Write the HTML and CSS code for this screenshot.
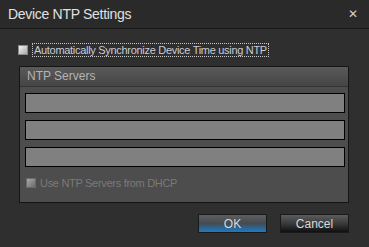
FILE: index.html
```html
<!DOCTYPE html>
<html>
<head>
	<title>Device NTP Settings</title>
	<link rel="stylesheet" href="styles.css">
</head>
<body>
	<div class="dialog">
		<div class="titlebar">
			<span class="title">Device NTP Settings</span>
			<span class="close">&#x2715;</span>
		</div>
		<div class="body">
			<label class="check-row">
				<span class="box"></span>
				<span class="focus">Automatically Synchronize Device Time using NTP</span>
			</label>
			<div class="group">
				<div class="group-head">NTP Servers</div>
				<div class="group-body">
					<input class="server" type="text">
					<input class="server" type="text">
					<input class="server" type="text">
					<label class="check-row disabled">
						<span class="box"></span>
						<span>Use NTP Servers from DHCP</span>
					</label>
				</div>
			</div>
			<div class="buttons">
				<button class="btn ok">OK</button>
				<button class="btn cancel">Cancel</button>
			</div>
		</div>
	</div>
</body>
</html>
```

FILE: styles.css
```css
body {
	margin: 0;
	padding: 0;
	background: #2e2e2e;
	font-family: 'Liberation Sans', Arial, sans-serif;
}
.dialog {
	width: 369px;
	height: 247px;
	background: #2f2f2f;
	overflow: hidden;
}
.titlebar {
	height: 28px;
	background: #2a2a2a;
	border-bottom: 1px solid #1a1a1a;
	display: flex;
	align-items: center;
	justify-content: space-between;
	padding: 0 11px 0 8px;
}
.title {
	color: #e0e0e0;
	font-size: 14px;
	letter-spacing: -0.3px;
}
.close {
	color: #d0d0d0;
	font-size: 12px;
}
.body {
	padding: 15px 20px 0 18px;
}
.check-row {
	display: flex;
	align-items: center;
	font-size: 11px;
	letter-spacing: -0.3px;
	color: #c9cdd6;
}
.box {
	width: 8px;
	height: 8px;
	border: 1px solid #8a8a8a;
	background: linear-gradient(135deg, #f4f4f4, #a8a8a8);
	margin-right: 5px;
}
.focus {
	outline: 1px dotted #c8c8c8;
	padding: 0 1px;
}
.group {
	margin: 10px 0 0 1px;
	border: 1px solid #151515;
	background: #4d4d4d;
}
.group-head {
	height: 19px;
	line-height: 19px;
	padding-left: 7px;
	font-size: 12px;
	color: #b4b4b4;
	background: linear-gradient(#5a5a5a, #454545);
	border-bottom: 1px solid #333;
}
.group-body {
	padding: 6px 3px 13px 5px;
	display: flex;
	flex-direction: column;
	gap: 7px;
}
.server {
	height: 18px;
	margin: 0;
	padding: 0;
	border: 1px solid #000;
	background: #808080;
}
.check-row.disabled {
	color: #7a7a7a;
	margin-top: 3px;
	padding-left: 1px;
}
.check-row.disabled .box {
	background: linear-gradient(135deg, #aaa, #6a6a6a);
	border-color: #6a6a6a;
	margin-right: 4px;
}
.buttons {
	display: flex;
	justify-content: flex-end;
	gap: 13px;
	margin-top: 11px;
}
.btn {
	width: 69px;
	height: 19px;
	border: 1px solid #1a1a1a;
	font-family: 'Liberation Sans', Arial, sans-serif;
	font-size: 12px;
	color: #d8d8d8;
	padding: 0;
}
.ok {
	background: linear-gradient(#5e5e5e, #444b52 50%, #1a7bc8);
}
.cancel {
	background: linear-gradient(#5c5c5c, #3a3a3a 50%, #101010);
}
```
